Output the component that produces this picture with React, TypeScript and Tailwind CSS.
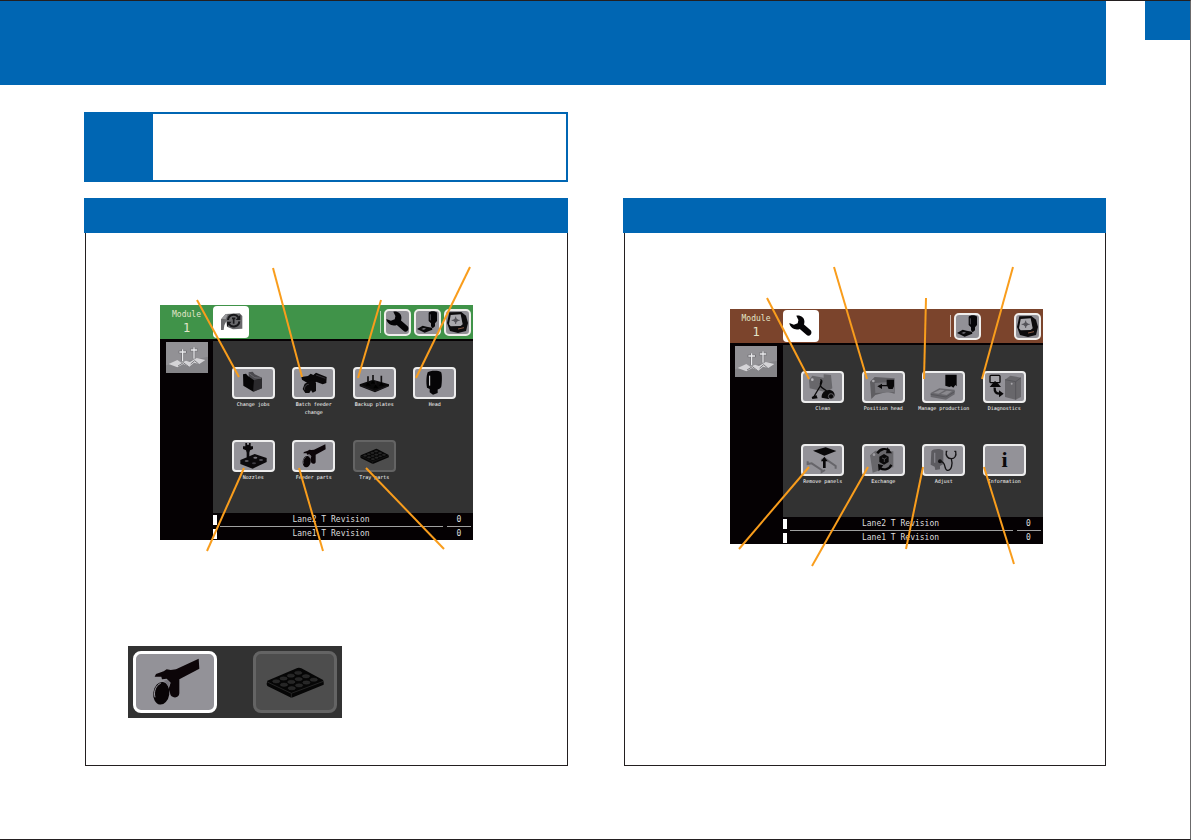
import type { ReactNode } from 'react'

type Line = [number, number, number, number]

type Tile = {
  label: string
  icon: ReactNode
  disabled?: boolean
}

const CHANGEOVER_LINES: Line[] = [
  [37, -5, 79, 72],
  [113, -37, 142, 72],
  [221, -5, 198, 73],
  [310, -38, 256, 73],
  [84, 163, 47, 246],
  [139, 163, 163, 246],
  [206, 163, 284, 244],
]

const MAINTENANCE_LINES: Line[] = [
  [37, -11, 79, 70],
  [104, -42, 137, 70],
  [196, -11, 194, 70],
  [283, -42, 252, 70],
  [79, 158, 9, 240],
  [138, 158, 82, 257],
  [193, 158, 176, 240],
  [254, 158, 284, 255],
]

const TRAY_CELLS = [0, 1, 2, 3].flatMap((i) =>
  [0, 1, 2].map((j) => ({
    cx: 38 + (88 * (i + 0.5)) / 4 + (70 * (j + 0.5)) / 3,
    cy: 81 - (34 * (i + 0.5)) / 4 + (31 * (j + 0.5)) / 3,
  })),
)

/* Tile icons share a 117x84 canvas; the two that are also shown large use 234x168. */

function TileSvg({ large, children }: { large?: boolean; children: ReactNode }) {
  return (
    <svg viewBox={large ? '0 0 234 168' : '0 0 117 84'} className="block h-full w-full" aria-hidden="true">
      {children}
    </svg>
  )
}

function FolderIcon() {
  return (
    <TileSvg>
      <path d="M44 20 L44 10 L56 8 L62 16 L84 26 L84 58 L58 68 Z" fill="#4a494e" />
      <path d="M60 34 L84 26 L84 58 L58 68 Z" fill="#2b2a2d" />
      <path d="M27 16 L36 14 L42 21 L60 34 L58 68 L28 50 Z" fill="#060506" />
      <path d="M46 14 L62 26 L82 28" fill="none" stroke="#77767b" strokeWidth="2" />
    </TileSvg>
  )
}

function FeederIcon() {
  return (
    <TileSvg large>
      <path
        d="M56 68 L60 60 L83 52 L92 46 L104 48 L120 46 L188 14 L190 44 L130 76 L130 118 C130 132 112 134 104 124 L98 104 L104 86 L92 74 L78 76 L76 68 Z"
        fill="#0c0508"
      />
      <ellipse cx="76" cy="118" rx="24" ry="34" transform="rotate(8 76 118)" fill="#080406" />
      <path d="M57 130 C52 112 60 94 74 88" fill="none" stroke="#9d9ba2" strokeWidth="3" />
      <path d="M84 80 L94 78 L102 86 L98 98 Z" fill="#77757c" />
    </TileSvg>
  )
}

function BatchFeederIcon() {
  return (
    <TileSvg>
      <path d="M22 24 L42 21 L50 14 L58 18 L66 11 L98 24 L97 42 L86 46 L66 38 L62 46 L44 44 L24 32 Z" fill="#0a0809" />
      <path d="M66 18 L94 28" stroke="#45434a" strokeWidth="2" />
      <path d="M32 44 L54 34 L66 42 L66 66 L56 71 L51 64 L46 72 L34 72 L26 60 Z" fill="#0c0a0b" />
      <path d="M32 62 C30 54 36 46 44 46" fill="none" stroke="#65636a" strokeWidth="2" />
    </TileSvg>
  )
}

function BackupPlateIcon() {
  return (
    <TileSvg>
      <path d="M14 46 L54 32 L102 46 L102 52 L60 70 L14 52 Z" fill="#0a090a" />
      <path d="M18 50 L60 66 L98 51" fill="none" stroke="#3c3b40" strokeWidth="1" />
      <path d="M39 22 V50 M54 18 V44 M79 20 V50 M62 36 V58" stroke="#141214" strokeWidth="5" />
      <path d="M32 50 L39 38 L47 50 Z M55 58 L62 46 L70 58 Z M72 50 L79 38 L87 50 Z M47 44 L54 34 L61 44 Z" fill="#000" />
    </TileSvg>
  )
}

function HeadIcon() {
  return (
    <TileSvg>
      <path d="M38 10 C44 4 70 3 78 9 C82 14 81 40 79 52 C77 60 70 60 68 62 L68 72 L54 77 L44 70 L44 60 L36 56 C33 40 34 20 38 10 Z" fill="#060507" />
      <path d="M44 20 V50" stroke="#e8e8ea" strokeWidth="3" />
    </TileSvg>
  )
}

function NozzleIcon() {
  return (
    <TileSvg>
      <path d="M19 54 L62 36 L98 48 L98 60 L56 80 L19 66 Z" fill="#0b090b" />
      <path d="M34 3 H39 V8 H45 V3 H50 V13 H57 V21 L48 25 L46 32 V46 L42 54 L38 46 V32 L36 25 L27 21 V13 H34 Z" fill="#0a080a" />
      <ellipse cx="38" cy="57" rx="6" ry="3" fill="#5c5a60" />
      <ellipse cx="64" cy="47" rx="6" ry="3" fill="#78767d" />
      <ellipse cx="60" cy="64" rx="6" ry="3" fill="#3e3c42" />
      <ellipse cx="81" cy="54" rx="6" ry="3" fill="#525057" />
    </TileSvg>
  )
}

function TrayIcon() {
  return (
    <TileSvg large>
      <path d="M34 80 L124 42 Q130 40 136 43 L200 77 Q204 80 203 92 L111 130 Q106 132 101 129 L34 96 Q30 90 34 80 Z" fill="#060606" />
      <path d="M34 84 L106 118 L202 82 M106 118 V130" fill="none" stroke="#333333" strokeWidth="2" />
      {TRAY_CELLS.map((c) => (
        <ellipse key={`${c.cx}-${c.cy}`} cx={c.cx} cy={c.cy} rx="11" ry="5" fill="#262626" stroke="#3a3a3a" />
      ))}
    </TileSvg>
  )
}

function CleanIcon() {
  return (
    <TileSvg>
      <path d="M18 22 L28 8 L62 14 L62 4 L84 6 L88 46 L70 58 L20 46 Z" fill="#68676b" />
      <circle cx="28" cy="20" r="4" fill="#b9b8bc" />
      <path d="M52 20 C60 22 56 30 50 42 L32 72 M54 24 C46 48 64 44 72 56" fill="none" stroke="#0a090a" strokeWidth="4" />
      <path d="M26 72 L40 66 L44 76 L28 78 Z" fill="#080708" />
      <path d="M56 74 C54 58 70 48 84 52 C94 56 98 66 92 74 L76 78 Z" fill="#0b0a0b" />
      <circle cx="84" cy="70" r="8" fill="#0b0a0b" stroke="#88868c" strokeWidth="2" />
    </TileSvg>
  )
}

function PositionHeadIcon() {
  return (
    <TileSvg>
      <path d="M18 26 L32 12 L92 16 L92 62 L70 56 L34 66 L22 78 Z" fill="#5f5e62" />
      <path d="M32 30 L90 26 L90 58 L34 60 Z" fill="#77767b" />
      <circle cx="28" cy="24" r="4" fill="#a9a8ac" />
      <path d="M68 20 H90 V40 L86 48 H74 L70 40 H54 V48 L40 40 L54 32 V36 H68 Z" fill="#080708" />
    </TileSvg>
  )
}

function ProductionIcon() {
  return (
    <TileSvg>
      <path d="M64 5 H98 V40 L94 36 L88 44 L82 40 L76 42 L64 38 Z" fill="#060506" />
      <path d="M20 60 L46 46 L92 50 L92 64 L66 80 L20 72 Z" fill="#68676c" />
      <path d="M28 60 L48 50 L62 52 L44 62 Z M50 63 L68 53 L84 55 L68 66 Z" fill="#8a898e" />
      <path d="M20 64 L66 72 L92 56" fill="none" stroke="#4f4e53" strokeWidth="2" />
    </TileSvg>
  )
}

function DiagnosticsIcon() {
  return (
    <TileSvg>
      <path d="M60 20 L76 8 L108 14 L108 72 L92 80 L60 72 Z" fill="#68676b" />
      <path d="M60 20 L92 26 V80 M92 26 L108 14" fill="none" stroke="#4f4e53" strokeWidth="2" />
      <circle cx="80" cy="32" r="3" fill="#a7a6aa" />
      <rect x="15" y="7" width="30" height="22" rx="3" fill="#a3a2a7" stroke="#080708" strokeWidth="4" />
      <path d="M14 42 L22 32 L30 24 L40 32 L48 42 Z" fill="#080708" />
      <path d="M29 44 C28 58 34 62 44 62" fill="none" stroke="#080708" strokeWidth="7" />
      <path d="M42 52 L56 62 L42 73 Z" fill="#080708" />
    </TileSvg>
  )
}

function RemovePanelIcon() {
  return (
    <TileSvg>
      <path d="M30 14 L68 4 L100 15 L64 29 Z" fill="#080708" />
      <path d="M14 46 V54 L26 52 L56 72 V78 L66 72 M54 42 L66 38 L98 60 V68" fill="none" stroke="#66656a" strokeWidth="6" />
      <path d="M64 32 L74 46 H68 V66 H60 V46 H54 Z" fill="#080708" />
    </TileSvg>
  )
}

function ExchangeIcon() {
  return (
    <TileSvg>
      <path d="M18 28 L34 14 L88 16 L88 64 L60 68 L26 80 Z" fill="#68676b" />
      <circle cx="30" cy="26" r="4" fill="#9e9da2" />
      <path d="M46 32 L60 24 L74 32 V48 L60 56 L46 48 Z" fill="#0a090a" />
      <path d="M54 36 L61 39 L68 35 M61 39 V48" fill="none" stroke="#6a696e" strokeWidth="2" />
      <path d="M40 22 C48 8 66 6 76 14" fill="none" stroke="#080708" strokeWidth="7" />
      <path d="M70 4 L84 22 L66 22 Z" fill="#080708" />
      <path d="M82 56 C76 70 60 74 48 66" fill="none" stroke="#080708" strokeWidth="7" />
      <path d="M42 54 L58 58 L44 76 Z" fill="#080708" />
    </TileSvg>
  )
}

function AdjustIcon() {
  return (
    <TileSvg>
      <path d="M22 16 C26 8 50 6 58 14 V54 L48 60 V70 L34 72 L32 62 L20 56 Z" fill="#5c5b60" />
      <path d="M32 20 V50" stroke="#84838a" strokeWidth="4" />
      <path d="M70 16 H67 C64 30 72 38 82 38 C92 38 98 30 95 16 H91" fill="none" stroke="#141315" strokeWidth="4" />
      <path d="M82 38 C86 52 84 74 70 73 C58 71 68 48 50 46" fill="none" stroke="#141315" strokeWidth="4" />
      <circle cx="48" cy="46" r="6" fill="#141315" />
    </TileSvg>
  )
}

function InfoIcon() {
  return (
    <TileSvg>
      <text x="59" y="64" textAnchor="middle" fontSize="66" fontWeight="700" fontFamily="'Liberation Serif', serif" fill="#0a090a">
        i
      </text>
    </TileSvg>
  )
}

function WrenchIcon() {
  return (
    <svg viewBox="3 3 66 66" className="block size-[23px]" aria-hidden="true">
      <path
        d="M24 5 C38 3 49 12 47 25 L46 30 L65 47 C72 55 62 68 53 60 L34 43 C22 48 6 41 4 26 L17 31 L28 27 L30 17 Z"
        fill="#050406"
      />
    </svg>
  )
}

function HeadPanelIcon() {
  return (
    <svg viewBox="0 0 69 69" className="block size-[23px]" aria-hidden="true">
      <path d="M38 5 C42 -1 59 -1 63 5 V30 L57 37 V46 L50 52 L45 46 V37 L38 30 Z" fill="#060507" />
      <path d="M43 10 V28" stroke="#55535a" strokeWidth="3" />
      <path d="M3 54 L20 44 L32 47 L48 50 L49 56 L26 65 Z" fill="#0a090a" />
      <path d="M16 54 L24 51 L30 53 L23 56 Z" fill="#77757c" />
    </svg>
  )
}

function MonitorIcon() {
  return (
    <svg viewBox="0 0 69 69" className="block size-[23px]" aria-hidden="true">
      <path d="M10 4 L46 3 L60 14 L66 36 L60 60 L36 66 L12 60 L3 36 Z" fill="#0c0b0d" />
      <path d="M14 12 L44 10 L50 40 L44 45 L14 46 L9 40 Z" fill="#a9a8ad" />
      <path d="M29 17 V39 M17 28 H41" stroke="#55545a" strokeWidth="3" />
      <path d="M29 20 L38 28 L29 36 L20 28 Z" fill="#55545a" />
      <path d="M36 54 L54 50" stroke="#8a5a45" strokeWidth="3" />
    </svg>
  )
}

function ChangeoverIcon() {
  return (
    <svg viewBox="0 0 108 96" className="block h-full w-full" aria-hidden="true">
      <path d="M24 40 L38 24 L80 22 L88 30 V68 L60 70 L42 62 L40 46 L34 58 L32 72 H24 Z" fill="#69696c" />
      <path d="M26 38 L38 25 L44 25 L38 40 Z" fill="#9b9b9e" />
      <path d="M45 42 A17 17 0 0 1 76 34 M79 46 A17 17 0 0 1 48 54" fill="none" stroke="#17171a" strokeWidth="6" />
      <path d="M82 26 V42 H68 Z M42 62 V47 H56 Z" fill="#17171a" />
      <path d="M62 35 V53 M57 37 H67" stroke="#17171a" strokeWidth="5" />
    </svg>
  )
}

function BoardThumbnail() {
  return (
    <svg viewBox="0 0 126 93" className="mx-auto mt-px block h-[31px] w-[42px] bg-[#929195]" aria-hidden="true">
      <path d="M0 70 L126 44 V93 H0 Z" fill="#858488" />
      <path d="M8 66 L34 54 L46 62 L60 56 L72 60 L92 48 L118 54 L100 66 L84 62 L70 74 L52 66 L34 76 Z" fill="#d5d4d7" />
      <path d="M36 72 L52 62 L68 74 M74 66 L86 56 L98 66" fill="none" stroke="#7b7a7e" strokeWidth="3" />
      <path d="M50 58 V22 M38 30 H62 M84 50 V16 M72 24 H96" fill="none" stroke="#66656a" strokeWidth="7" />
      <path d="M50 58 V22 M40 30 H60 M84 50 V16 M74 24 H94" fill="none" stroke="#e9e9eb" strokeWidth="4" />
    </svg>
  )
}

const CHANGEOVER_TILES: Tile[] = [
  { label: 'Change jobs', icon: <FolderIcon /> },
  { label: 'Batch feeder change', icon: <BatchFeederIcon /> },
  { label: 'Backup plates', icon: <BackupPlateIcon /> },
  { label: 'Head', icon: <HeadIcon /> },
  { label: 'Nozzles', icon: <NozzleIcon /> },
  { label: 'Feeder parts', icon: <FeederIcon /> },
  { label: 'Tray parts', icon: <TrayIcon />, disabled: true },
]

const MAINTENANCE_TILES: Tile[] = [
  { label: 'Clean', icon: <CleanIcon /> },
  { label: 'Position head', icon: <PositionHeadIcon /> },
  { label: 'Manage production', icon: <ProductionIcon /> },
  { label: 'Diagnostics', icon: <DiagnosticsIcon /> },
  { label: 'Remove panels', icon: <RemovePanelIcon /> },
  { label: 'Exchange', icon: <ExchangeIcon /> },
  { label: 'Adjust', icon: <AdjustIcon /> },
  { label: 'Information', icon: <InfoIcon /> },
]

function ModeButton({ label, children }: { label: string; children: ReactNode }) {
  return (
    <button
      type="button"
      aria-label={label}
      className="flex size-[27px] items-center justify-center rounded-[5px] border-2 border-[#f0eeec] bg-[#929197]"
    >
      {children}
    </button>
  )
}

function MenuTile({ tile }: { tile: Tile }) {
  return (
    <button type="button" disabled={tile.disabled} className="flex flex-col items-center gap-px">
      <span
        className={
          tile.disabled
            ? 'block h-8 w-[43px] rounded-[4px] border-2 border-[#646464] bg-[#4d4d4d]'
            : 'block h-8 w-[43px] rounded-[4px] border-2 border-[#eeeeee] bg-[#939298]'
        }
      >
        {tile.icon}
      </span>
      <span className="max-w-[54px] text-[5px] leading-[8px] text-white">{tile.label}</span>
    </button>
  )
}

function LaneRow({ name, count }: { name: string; count: number }) {
  return (
    <div className="flex h-[13px] items-center text-[8px] leading-[12px] text-[#dedede]">
      <span className="h-[10px] w-1 bg-white" />
      <span className="flex-1 text-center">{name}</span>
      <span className="w-[28px] text-center">{count}</span>
    </div>
  )
}

type ScreenProps = {
  tone: string
  active: ReactNode
  modes: ReactNode
  tiles: Tile[]
  lines: Line[]
}

/** Operation panel of a placement module, with the leader lines that point at its keys. */
function MachineScreen({ tone, active, modes, tiles, lines }: ScreenProps) {
  return (
    <figure className="relative w-[313px] font-['DejaVu_Sans_Mono',monospace]">
      <div className="flex h-[235px] flex-col bg-[#050103]">
        <div className={`flex h-[34px] items-center ${tone}`}>
          <div className="w-[53px] text-center text-[#e3e6c9]">
            <p className="text-[8px] leading-[12px]">Module</p>
            <p className="text-[12px] leading-[14px]">1</p>
          </div>
          <button
            type="button"
            aria-label="Current mode"
            className="flex h-8 w-9 items-center justify-center rounded-[4px] bg-white"
          >
            {active}
          </button>
          <div className="ml-auto flex items-center gap-[3px] pr-[2px]">
            <span className="h-[22px] w-px bg-white/60" />
            {modes}
          </div>
        </div>
        <div className="flex flex-1 pt-[2px]">
          <div className="w-[53px]">
            <BoardThumbnail />
          </div>
          <div className="flex flex-1 flex-col">
            <div className="grid flex-1 grid-cols-4 grid-rows-[73px_73px] items-start bg-[#323232] pt-[26px] pr-2 pl-[10px]">
              {tiles.map((tile) => (
                <MenuTile key={tile.label} tile={tile} />
              ))}
            </div>
            <div className="bg-[#050103]">
              <LaneRow name="Lane2 T Revision" count={0} />
              <div className="flex gap-1 pr-[2px] pl-[7px]">
                <span className="h-px flex-1 bg-[#a0a0a0]" />
                <span className="h-px w-6 bg-[#a0a0a0]" />
              </div>
              <LaneRow name="Lane1 T Revision" count={0} />
            </div>
          </div>
        </div>
      </div>
      <svg
        viewBox="0 0 313 235"
        className="pointer-events-none absolute inset-0 h-full w-full overflow-visible"
        stroke="#f99d1c"
        strokeWidth="2"
        aria-hidden="true"
      >
        {lines.map(([x1, y1, x2, y2]) => (
          <line key={`${x1},${y1}`} x1={x1} y1={y1} x2={x2} y2={y2} />
        ))}
      </svg>
    </figure>
  )
}

function Section({ children }: { children: ReactNode }) {
  return (
    <section className="flex flex-col">
      <div className="h-[35px] bg-[#0066b3]" />
      <div className="ml-px flex-1 border border-t-0 border-[#231f20] pt-[72px]">{children}</div>
    </section>
  )
}

export default function App() {
  return (
    <div className="flex min-h-screen flex-col border-y border-r border-y-[#231f20] border-r-[#6b6a6b] bg-white">
      <header className="flex items-start gap-[39px]">
        <div className="h-[84px] flex-1 bg-[#0066b3]" />
        <div className="h-[39px] w-[45px] bg-[#0066b3]" />
      </header>

      <main className="grid flex-1 grid-cols-2 grid-rows-[70px_1fr] gap-x-[55px] gap-y-4 px-[84px] pt-[27px] pb-[73px]">
        <div className="col-span-2 grid grid-cols-2 gap-x-[55px]">
          <div className="flex border-2 border-[#0066b3]">
            <div className="w-[67px] bg-[#0066b3]" />
          </div>
        </div>

        <Section>
          <div className="pl-[74px]">
            <MachineScreen
              tone="bg-[#409349]"
              active={<ChangeoverIcon />}
              modes={
                <>
                  <ModeButton label="Maintenance">
                    <WrenchIcon />
                  </ModeButton>
                  <ModeButton label="Production">
                    <HeadPanelIcon />
                  </ModeButton>
                  <ModeButton label="Display">
                    <MonitorIcon />
                  </ModeButton>
                </>
              }
              tiles={CHANGEOVER_TILES}
              lines={CHANGEOVER_LINES}
            />
          </div>
          <div className="mt-[106px] ml-[42px] flex h-[72px] w-[214px] items-center justify-between bg-[#323232] px-[5px]">
            <button
              type="button"
              aria-label="Feeder parts, available"
              className="h-[62px] w-[84px] rounded-[8px] border-[3px] border-white bg-[#939298]"
            >
              <FeederIcon />
            </button>
            <button
              type="button"
              aria-label="Tray parts, unavailable"
              disabled
              className="h-[62px] w-[84px] rounded-[8px] border-[3px] border-[#646464] bg-[#4d4d4d]"
            >
              <TrayIcon />
            </button>
          </div>
        </Section>

        <Section>
          <div className="pt-1 pl-[105px]">
            <MachineScreen
              tone="bg-[#7b442c]"
              active={<WrenchIcon />}
              modes={
                <>
                  <ModeButton label="Production">
                    <HeadPanelIcon />
                  </ModeButton>
                  <span className="w-[27px]" />
                  <ModeButton label="Display">
                    <MonitorIcon />
                  </ModeButton>
                </>
              }
              tiles={MAINTENANCE_TILES}
              lines={MAINTENANCE_LINES}
            />
          </div>
        </Section>
      </main>
    </div>
  )
}
